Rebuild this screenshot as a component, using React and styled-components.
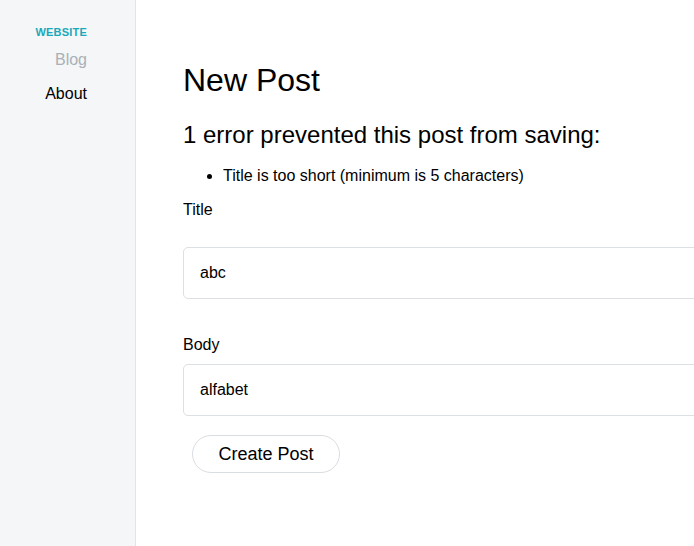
import React from 'react';
import styled, { createGlobalStyle } from 'styled-components';

const GlobalStyle = createGlobalStyle`
  html, body {
    margin: 0;
    padding: 0;
    overflow: hidden;
    background: #ffffff;
  }
  body {
    font-family: "Liberation Sans", Arial, sans-serif;
    color: #000000;
  }
`;

const Layout = styled.div`
  display: flex;
  min-height: 546px;
  overflow: hidden;
`;

const Sidebar = styled.aside`
  flex: 0 0 136px;
  box-sizing: border-box;
  background: #f5f6f8;
  border-right: 1px solid #e1e4e8;
  padding: 26px 48px 0 0;
  text-align: right;
`;

const SiteName = styled.div`
  font-size: 11px;
  font-weight: 700;
  color: #1aa9ba;
  letter-spacing: 0.2px;
  margin-bottom: 13px;
`;

const NavLink = styled.a`
  display: block;
  font-size: 16px;
  color: ${(p) => (p.$muted ? '#a9b0b7' : '#000000')};
  text-decoration: none;
  margin-bottom: 16px;
`;

const Main = styled.main`
  flex: 1;
  min-width: 0;
  overflow: hidden;
  padding: 62px 0 0 47px;
`;

const Title = styled.h1`
  margin: 0;
  font-size: 32px;
  font-weight: 400;
`;

const ErrorTitle = styled.h2`
  margin: 21.5px 0 0;
  font-size: 24px;
  font-weight: 400;
`;

const ErrorList = styled.ul`
  margin: 18.5px 0 0;
  padding-left: 40px;
  font-size: 16px;
`;

const Field = styled.div`
  display: flex;
  flex-direction: column;
  align-items: flex-start;
`;

const Label = styled.label`
  font-size: 16px;
  margin-top: ${(p) => p.$top}px;
  margin-bottom: ${(p) => p.$bottom}px;
`;

const Input = styled.input`
  box-sizing: border-box;
  width: 540px;
  height: 52px;
  padding: 0 16px;
  border: 1px solid #dcdfe3;
  border-radius: 5px;
  font-family: "Liberation Sans", Arial, sans-serif;
  font-size: 16px;
  color: #000000;
  background: #ffffff;
  outline: none;
`;

const Button = styled.button`
  box-sizing: border-box;
  margin: 19px 0 0 9px;
  width: 148px;
  height: 38px;
  padding: 2px 0 0;
  border: 1px solid #d9dee2;
  border-radius: 19px;
  background: #ffffff;
  font-family: "Liberation Sans", Arial, sans-serif;
  font-size: 18px;
  color: #000000;
  cursor: pointer;
`;

export default function App() {
  return (
    <>
      <GlobalStyle />
      <Layout>
        <Sidebar>
          <SiteName>WEBSITE</SiteName>
          <NavLink href="#" $muted>Blog</NavLink>
          <NavLink href="#">About</NavLink>
        </Sidebar>
        <Main>
          <Title>New Post</Title>
          <ErrorTitle>1 error prevented this post from saving:</ErrorTitle>
          <ErrorList>
            <li>Title is too short (minimum is 5 characters)</li>
          </ErrorList>
          <form onSubmit={(e) => e.preventDefault()}>
            <Field>
              <Label htmlFor="title" $top={16.2} $bottom={28}>Title</Label>
              <Input id="title" defaultValue="abc" />
            </Field>
            <Field>
              <Label htmlFor="body" $top={37} $bottom={9.6}>Body</Label>
              <Input id="body" defaultValue="alfabet" />
            </Field>
            <Button type="submit">Create Post</Button>
          </form>
        </Main>
      </Layout>
    </>
  );
}
